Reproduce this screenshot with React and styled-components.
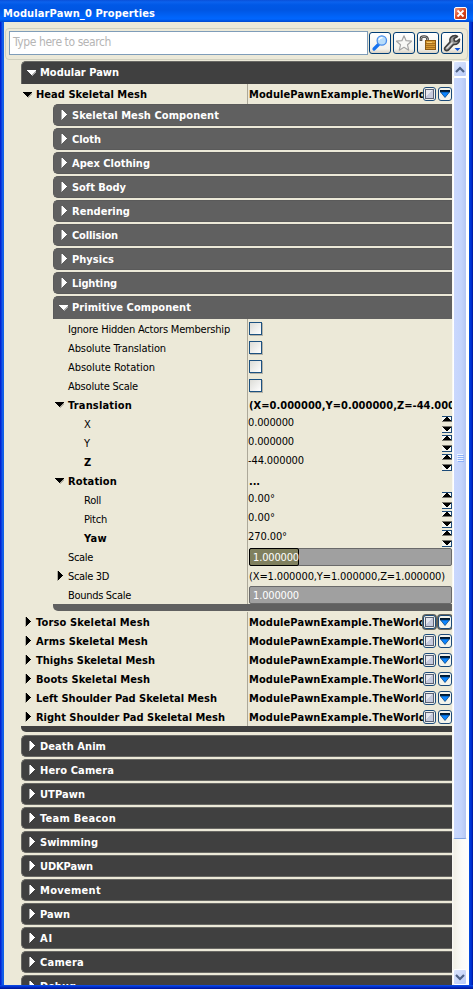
import React, { useLayoutEffect, useRef, useState } from 'react';
import styled, { createGlobalStyle, css } from 'styled-components';

const Global = createGlobalStyle`
  * { box-sizing: border-box; }
  html, body { margin: 0; padding: 0; overflow: hidden; }
  body { font-family: Tahoma, "DejaVu Sans Condensed", "DejaVu Sans", sans-serif; font-stretch: condensed; font-size: 11px; }
`;

const Window = styled.div`
  width: 473px;
  height: 989px;
  display: flex;
  flex-direction: column;
  background: linear-gradient(90deg, #0017c9 0, #0831d9 1px, #166aee 3px, #0855dd 4px, #0855dd 469px, #003ddc 470px, #0029c8 472px, #00138c 473px);
`;
const TitleBar = styled.header`
  height: 22px;
  flex: none;
  display: flex;
  align-items: center;
  justify-content: space-between;
  padding: 4px 6px 0 3px;
  color: #fff;
  background: linear-gradient(180deg, #0a50d8 0, #0b62ee 2px, #0058e6 5px, #0056e3 10px, #0064fa 17px, #0066ff 19px, #0048cf 22px);
`;
const CloseButton = styled.button`
  width: 13px;
  height: 13px;
  padding: 0;
  display: grid;
  place-items: center;
  border: 1px solid #fff;
  border-radius: 2px;
  background: linear-gradient(135deg, #f09b80, #d9441c 55%, #b93311);
`;
const Body = styled.main`
  flex: 1;
  min-height: 0;
  display: flex;
  flex-direction: column;
  margin: 0 4px 0 4px;
  background: #ece9d8;
`;
const BottomEdge = styled.div`
  height: 4px;
  flex: none;
  background: linear-gradient(180deg, #0f50e6, #0030d0 45%, #00138c);
`;
const Toolbar = styled.div`
  height: 32px;
  flex: none;
  margin: 6px 1px 1px 1px;
  display: flex;
  align-items: center;
  gap: 2px;
  padding: 0 4px 2px 3px;
  border: 1px solid #d0d0bf;
  border-radius: 4px;
`;
const Search = styled.div`
  width: 359px;
  height: 24px;
  margin-right: -1px;
  padding: 0 0 1px 3px;
  display: flex;
  align-items: center;
  border: 1px solid #7f9db9;
  background: #fff;
  color: #b5b5b5;
`;
const ToolButton = styled.button`
  width: 22px;
  height: 22px;
  padding: 0;
  display: grid;
  place-items: center;
  border: 1px solid #003c74;
  border-radius: 3px;
  background: linear-gradient(180deg, #fff, #f3f2ec 80%, #d8d0c4);
`;
const Content = styled.div`
  flex: 1;
  min-height: 0;
  display: flex;
`;
const List = styled.div`
  width: 431px;
  flex: none;
  margin-left: 17px;
  overflow: hidden;
`;
const Header = styled.div`
  height: ${p => (p.$open ? 23 : 22)}px;
  margin-bottom: ${p => (p.$open ? 0 : 2)}px;
  padding: ${p => (p.$open ? '0 0 1px 4px' : '0 0 0 4px')};
  display: flex;
  align-items: center;
  gap: 2px;
  color: #fff;
  background: ${p => (p.$inner ? '#606060' : '#404040')};
  border: 0 solid ${p => (p.$inner ? '#5a5a5a' : '#686864')};
  border-width: 1px 0 ${p => (p.$open ? 0 : 1)}px 1px;
  border-radius: ${p => (p.$open ? '5px 0 0 0' : '5px 0 0 5px')};
`;
const Footer = styled.div`
  height: ${p => (p.$inner ? 7 : 6)}px;
  margin-bottom: ${p => (p.$inner ? 1 : 3)}px;
  border-radius: 0 0 0 5px;
  background: ${p => (p.$inner ? '#606060' : '#404040')};
`;
const Indent = styled.div`
  margin-left: 32px;
`;
const Row = styled.div`
  height: ${p => p.$h || 19}px;
  display: grid;
  grid-template-columns: ${p => (p.$inner ? 194 : 226)}px minmax(0, 1fr);
`;
const NameCell = styled.div`
  display: flex;
  align-items: center;
  gap: 2px;
  padding: 1px 0 0 ${p => p.$pad}px;
`;
const ValueCell = styled.div`
  display: flex;
  align-items: center;
  min-width: 0;
  overflow: hidden;
  padding-left: 1px;
  border-left: 1px solid #aca899;
`;
const Clip = styled.div`
  flex: 1;
  min-width: 0;
  overflow: hidden;
  display: flex;
  margin-left: ${p => (p.$raised ? -1 : 0)}px;
  padding-top: ${p => (p.$raised ? 0 : 1)}px;
  padding-bottom: ${p => (p.$raised ? 3 : 0)}px;
`;
const ArrowSlot = styled.span`
  width: 12px;
  flex: none;
  display: flex;
  justify-content: center;
`;
const Text = styled.span`
  white-space: pre;
  line-height: 15px;
  font-size: ${p => p.$size || 11}px;
  ${p => p.$bold && css`font-weight: 700;`}
`;
const CheckBox = styled.span`
  width: 13px;
  height: 13px;
  border: 1px solid #1c5180;
  background: linear-gradient(135deg, #dcdcd7, #fff);
  box-shadow: 1px 1px 0 #b5b3a8;
`;
const SmallButton = styled.span`
  width: ${p => (p.$narrow ? 13 : 14)}px;
  height: 14px;
  flex: none;
  margin-right: ${p => (p.$narrow ? 2 : 0)}px;
  display: grid;
  place-items: center;
  border: 1px solid #1c4a78;
  border-radius: 3px;
  background: #f3f3ec;
  box-shadow: ${p => (p.$focus ? '0 0 0 1px #66645c' : 'none')};
`;
const Spinner = styled.span`
  width: 10px;
  height: 19px;
  padding-top: 2px;
  flex: none;
  display: flex;
  flex-direction: column;
  justify-content: space-between;
`;
const Slider = styled.div`
  flex: 1;
  height: 18px;
  display: flex;
  align-items: center;
  border: 1px solid #6a6a6a;
  border-radius: 2px;
  background: #a0a0a0;
  color: #fff;
`;
const SliderFill = styled.div`
  width: 50px;
  height: 18px;
  margin-left: -1px;
  padding-left: 3px;
  padding-top: 1px;
  display: flex;
  align-items: center;
  border: ${p => (p.$active ? '1px solid #000' : '1px solid transparent')};
  border-radius: 2px;
  background: ${p => (p.$active ? '#80805e' : 'transparent')};
`;
const ScrollBar = styled.div`
  width: 17px;
  flex: none;
  display: flex;
  flex-direction: column;
  padding: 0 2px 0 1px;
  background: linear-gradient(90deg, #fbfbf7, #f1f0e7 2px, #fbfbf8 10px, #fefefd);
`;
const ScrollButton = styled.div`
  height: 16px;
  flex: none;
  display: grid;
  place-items: center;
  border: 1px solid #fff;
  border-radius: 2px;
  background: linear-gradient(135deg, #dbe5fd, #b9cbf8);
`;
const Thumb = styled.div`
  height: 762px;
  flex: none;
  display: grid;
  place-items: center;
  border: 1px solid #fff;
  border-bottom: 1px solid #7ea0e0;
  border-radius: 2px;
  background: linear-gradient(90deg, #cad8fd, #c4d4fc 60%, #b5c7f3);
`;
const Track = styled.div`
  flex: 1;
`;

/* Spreads a label's letters so that it takes up a given width. */
function Label({ children, w, bold, size }) {
  const ref = useRef(null);
  const [spacing, setSpacing] = useState(0);
  useLayoutEffect(() => {
    if (w) setSpacing((w - ref.current.getBoundingClientRect().width) / children.length);
  }, []);
  return <Text ref={ref} $bold={bold} $size={size} style={{ letterSpacing: spacing }}>{children}</Text>;
}

function Arrow({ open, light }) {
  const c = light ? '#fff' : '#000';
  const s = light ? '#aaa' : '#b0ada0';
  return (
    <ArrowSlot>
      {open ? (
        <svg width="10" height="6" shapeRendering="crispEdges">
          <path d="M2 .5H10L6 6H5Z" fill={s} /><path d="M0 0H9L5 5H4Z" fill={c} />
        </svg>
      ) : (
        <svg width="6" height="10" shapeRendering="crispEdges">
          <path d="M0 0H1V10H0Z" fill={s} /><path d="M1 0L6 4.5V5L1 9.5Z" fill={c} />
        </svg>
      )}
    </ArrowSlot>
  );
}

function Section({ name, w, open, inner }) {
  return (
    <Header $open={open} $inner={inner}>
      <Arrow open={open} light />
      <Label bold w={w}>{name}</Label>
    </Header>
  );
}

function Spin() {
  return (
    <Spinner>
      <svg width="10" height="6" shapeRendering="crispEdges">
        <path d="M0 0H10V6H0Z" fill="#f6f6f0" />
        <path d="M0 0H10V5H9V1H0Z" fill="#1c4a78" />
        <path d="M4 1H6L9 5H1Z" fill="#000" />
        <path d="M0 5H10V6H0Z" fill="#77756c" />
      </svg>
      <svg width="10" height="7" shapeRendering="crispEdges">
        <path d="M0 0H10V7H0Z" fill="#f6f6f0" />
        <path d="M9 0H10V7H0V6H9Z" fill="#1c4a78" />
        <path d="M0 0H10V1H0Z" fill="#77756c" />
        <path d="M1 1H9L6 5H4Z" fill="#000" />
      </svg>
    </Spinner>
  );
}

function MeshRow({ name, w, open, focus, h }) {
  return (
    <Row $h={h}>
      <NameCell $pad={1}>
        <Arrow open={open} />
        <Label bold w={w}>{name}</Label>
      </NameCell>
      <ValueCell>
        <Clip><Label bold w={177}>ModulePawnExample.TheWorld</Label></Clip>
        <SmallButton $focus={focus} $narrow>
          <svg width="9" height="10" shapeRendering="crispEdges">
            <path d="M0 0H9V10H0Z" fill="#5a6276" />
            <path d="M1 1H8V9H1Z" fill="#c6cbdd" />
            <path d="M1 1H7L1 8Z" fill="#e6e8f0" />
          </svg>
        </SmallButton>
        <SmallButton $focus={focus}>
          <svg width="12" height="10">
            <path d="M1 1H11V3H1Z" fill="#00182e" />
            <path d="M1.500 3H10.500L6 8.500Z" fill="#0b84ff" stroke="#003a70" strokeWidth=".7" />
          </svg>
        </SmallButton>
      </ValueCell>
    </Row>
  );
}

function Property({ name, w, pad = 15, bold, arrow, children }) {
  return (
    <Row $inner>
      <NameCell $pad={arrow ? 1 : pad}>
        {arrow && <Arrow open={arrow === 'open'} />}
        <Label bold={bold} w={w}>{name}</Label>
      </NameCell>
      <ValueCell>{children}</ValueCell>
    </Row>
  );
}

const Glass = () => (
  <svg width="18" height="18" viewBox="0 0 18 18">
    <path d="M7.5 10.5L3 15" stroke="#1672f0" strokeWidth="3.2" strokeLinecap="round" />
    <circle cx="10.8" cy="6.5" r="4.7" fill="#b7dcfb" stroke="#4a8eea" strokeWidth="1.3" />
    <path d="M8 6C8.300 4.500 10 3.500 11.500 3.800" fill="none" stroke="#fff" strokeWidth="1.4" />
  </svg>
);
const Star = () => (
  <svg width="18" height="18" viewBox="0 0 18 18">
    <path d="M9 1.800L11.100 6.700L16.500 7.200L12.500 10.800L13.700 16.200L9 13.300L4.300 16.200L5.500 10.800L1.500 7.200L6.900 6.700Z" fill="#f8f8f6" stroke="#a5a5a5" strokeWidth="1.200" strokeLinejoin="round" />
  </svg>
);
const Lock = () => (
  <svg width="18" height="18" viewBox="0 0 18 18">
    <path d="M2 7V4.500Q2 2.500 5 2.500T8.500 4.500V8" fill="none" stroke="#3c3c3c" strokeWidth="2.600" />
    <path d="M2 6.500V4.500Q2 2.500 5 2.500T8.500 4.500V7" fill="none" stroke="#b0b0b0" strokeWidth=".9" />
    <rect x="6.500" y="6.500" width="10" height="9" fill="#d79a32" stroke="#8d5a12" />
    <path d="M7 9.500H16M7 11.500H16M7 13.500H16" stroke="#a86f1c" />
    <path d="M8 8.500H13" stroke="#f3ca72" />
  </svg>
);
const Wrench = () => (
  <svg width="20" height="20" viewBox="0 0 20 20">
    <path d="M3 14.500L8 9C7 5.500 9 2.500 13.500 2.500L15.500 3.500L12 5.500L12.300 8L14.800 8.300L17.500 6.200C17.700 9.500 15 12 11.500 11.500L6.500 17C4 18.500 1.500 16.500 3 14.500Z" fill="#999" stroke="#3d3d3d" strokeWidth="1.600" strokeLinejoin="round" />
    <path d="M4.500 15.500L10.500 9.500" stroke="#e2e2e2" strokeWidth="1.200" />
    <path d="M12.500 15H18.500L15.500 18Z" fill="#0b50d8" />
  </svg>
);

const INNER = [['Skeletal Mesh Component', 147], ['Cloth', 29], ['Apex Clothing', 78], ['Soft Body', 54], ['Rendering', 58], ['Collision', 46], ['Physics', 42], ['Lighting', 45]];
const OUTER = [['Death Anim', 66], ['Hero Camera', 74], ['UTPawn', 45], ['Team Beacon', 76], ['Swimming', 58], ['UDKPawn', 53], ['Movement', 61], ['Pawn', 30], ['AI', 13], ['Camera', 44], ['Debug', 36]];
const MESHES = [['Torso Skeletal Mesh', 114], ['Arms Skeletal Mesh', 112], ['Thighs Skeletal Mesh', 119], ['Boots Skeletal Mesh', 114], ['Left Shoulder Pad Skeletal Mesh', 181], ['Right Shoulder Pad Skeletal Mesh', 189]];
const CHECKS = [['Ignore Hidden Actors Membership', 162], ['Absolute Translation', 98], ['Absolute Rotation', 87], ['Absolute Scale', 70]];

const Num = ({ v, w }) => <><Clip $raised><Label w={w}>{v}</Label></Clip><Spin /></>;

export default function App() {
  return (
    <Window>
      <Global />
      <TitleBar>
        <Label bold w={152}>ModularPawn_0 Properties</Label>
        <CloseButton><svg width="9" height="9"><path d="M1.500 1.500L7.500 7.500M7.500 1.500L1.500 7.500" stroke="#fff" strokeWidth="1.800" /></svg></CloseButton>
      </TitleBar>
      <Body>
        <Toolbar>
          <Search><Label size={12} w={98}>Type here to search</Label></Search>
          <ToolButton><Glass /></ToolButton>
          <ToolButton><Star /></ToolButton>
          <ToolButton><Lock /></ToolButton>
          <ToolButton><Wrench /></ToolButton>
        </Toolbar>
        <Content>
          <List>
            <Section name="Modular Pawn" w={79} open />
            <MeshRow name="Head Skeletal Mesh" w={111} open h={20} />
            <Indent>
              {INNER.map(([n, w]) => <Section key={n} name={n} w={w} inner />)}
              <Section name="Primitive Component" w={119} inner open />
              {CHECKS.map(([n, w]) => <Property key={n} name={n} w={w}><CheckBox /></Property>)}
              <Property name="Translation" w={64} bold arrow="open"><Clip><Label bold w={206}>(X=0.000000,Y=0.000000,Z=-44.000</Label></Clip></Property>
              <Property name="X" pad={31} w={6}><Num v="0.000000" w={46} /></Property>
              <Property name="Y" pad={31} w={6}><Num v="0.000000" w={46} /></Property>
              <Property name="Z" pad={31} w={7} bold><Num v="-44.000000" w={56} /></Property>
              <Property name="Rotation" w={49} bold arrow="open"><Clip><Label bold w={11}>...</Label></Clip></Property>
              <Property name="Roll" pad={31} w={17}><Num v="0.00°" w={27} /></Property>
              <Property name="Pitch" pad={31} w={23}><Num v="0.00°" w={27} /></Property>
              <Property name="Yaw" pad={31} w={23} bold><Num v="270.00°" w={39} /></Property>
              <Property name="Scale" w={25}><Slider><SliderFill $active><Label w={46}>1.000000</Label></SliderFill></Slider></Property>
              <Property name="Scale 3D" w={41} arrow="closed"><Clip><Label w={196}>(X=1.000000,Y=1.000000,Z=1.000000)</Label></Clip></Property>
              <Property name="Bounds Scale" w={63}><Slider><SliderFill><Label w={46}>1.000000</Label></SliderFill></Slider></Property>
              <Footer $inner />
            </Indent>
            {MESHES.map(([n, w], i) => <MeshRow key={n} name={n} w={w} focus={i === 0} />)}
            <Footer />
            {OUTER.map(([n, w]) => <Section key={n} name={n} w={w} />)}
          </List>
          <ScrollBar>
            <ScrollButton><svg width="10" height="7"><path d="M1 6L5 2L9 6" fill="none" stroke="#4d6185" strokeWidth="2.200" /></svg></ScrollButton>
            <Thumb><svg width="7" height="8" shapeRendering="crispEdges"><path d="M0 0H6V1H0ZM0 2H6V3H0ZM0 4H6V5H0ZM0 6H6V7H0Z" fill="#eef4fe" /><path d="M1 1H7V2H1ZM1 3H7V4H1ZM1 5H7V6H1ZM1 7H7V8H1Z" fill="#8cb0f8" /></svg></Thumb>
            <Track />
            <ScrollButton><svg width="10" height="7"><path d="M1 1L5 5L9 1" fill="none" stroke="#4d6185" strokeWidth="2.200" /></svg></ScrollButton>
          </ScrollBar>
        </Content>
      </Body>
      <BottomEdge />
    </Window>
  );
}
